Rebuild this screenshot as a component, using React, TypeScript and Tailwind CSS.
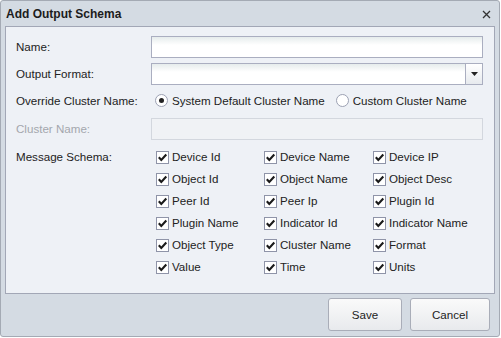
import { useState } from 'react';

const fields = [
  ['Device Id', 'Device Name', 'Device IP'],
  ['Object Id', 'Object Name', 'Object Desc'],
  ['Peer Id', 'Peer Ip', 'Plugin Id'],
  ['Plugin Name', 'Indicator Id', 'Indicator Name'],
  ['Object Type', 'Cluster Name', 'Format'],
  ['Value', 'Time', 'Units'],
];

function Check({ label }: { label: string }) {
  return (
    <label className="flex items-center h-[22px] gap-[3px] text-[#222]">
      <span className="w-[13px] h-[13px] border border-[#8f94a8] bg-white flex items-center justify-center shrink-0">
        <svg width="11" height="11" viewBox="0 0 11 11">
          <path d="M1.8 5.2 L4.3 7.9 L9.3 2.5" fill="none" stroke="#1a1a1a" strokeWidth="2.1" />
        </svg>
      </span>
      {label}
    </label>
  );
}

function Radio({ label, on }: { label: string; on?: boolean }) {
  return (
    <span className="flex items-center gap-[4px]">
      <span className="w-[13px] h-[13px] rounded-full border border-[#9ca1b3] bg-white flex items-center justify-center">
        {on && <span className="w-[5px] h-[5px] rounded-full bg-[#222]" />}
      </span>
      {label}
    </span>
  );
}

const input = 'h-[22px] border border-[#aaaec0] bg-gradient-to-b from-[#e6ecec] to-white to-[40%]';

export default function App() {
  const [mode] = useState('default');
  return (
    <div className="w-[501px] h-[338px] bg-white font-['Liberation_Sans',sans-serif] text-[11.6px] text-[#222]">
      <div className="w-[500px] h-[337px] border border-[#a4aab4] rounded-[3px] bg-[#d4dbe3] flex flex-col">
        {/* title */}
        <div className="h-[25px] flex items-center justify-between pl-[5px] pr-[8px]">
          <span className="font-bold text-[12px] text-[#1c1c1c]">Add Output Schema</span>
          <svg width="9" height="9" viewBox="0 0 9 9" className="mt-[1px]">
            <path d="M1 1 L8 8 M8 1 L1 8" stroke="#333" strokeWidth="1.3" />
          </svg>
        </div>

        {/* body */}
        <div className="mx-[4px] h-[268px] border border-[#a2a7b6] bg-[#eef1f6] pl-[10px] pr-[11px] pt-[9px]">
          <div className="flex items-center h-[22px]">
            <span className="w-[135px]">Name:</span>
            <div className={`flex-1 ${input}`} />
          </div>
          <div className="flex items-center h-[22px] mt-[5px]">
            <span className="w-[135px]">Output Format:</span>
            <div className={`flex-1 flex ${input}`}>
              <div className="flex-1" />
              <div className="w-[17px] border-l border-[#aaaec0] bg-gradient-to-b from-white to-[#e7eaee] flex items-center justify-center">
                <svg width="7" height="4" viewBox="0 0 7 4"><path d="M0 0 H7 L3.5 4 Z" fill="#222" /></svg>
              </div>
            </div>
          </div>
          <div className="flex items-center h-[22px] mt-[5px]">
            <span className="w-[135px]">Override Cluster Name:</span>
            <div className="flex items-center gap-[11px] pl-[4px]">
              <Radio label="System Default Cluster Name" on={mode === 'default'} />
              <Radio label="Custom Cluster Name" />
            </div>
          </div>
          <div className="flex items-center h-[22px] mt-[6px]">
            <span className="w-[135px] text-[#a4a7ad]">Cluster Name:</span>
            <div className="flex-1 h-[22px] border border-[#d3d7de] bg-[#f0f2f5]" />
          </div>
          <div className="flex mt-[6px]">
            <span className="w-[135px] h-[22px] flex items-center">Message Schema:</span>
            <div className="grid grid-cols-[108px_109px_auto] pl-[5px]">
              {fields.flat().map((f) => (
                <Check key={f} label={f} />
              ))}
            </div>
          </div>
        </div>

        {/* footer */}
        <div className="flex justify-end gap-[8px] pr-[9px] pt-[4px]">
          <button className="w-[74px] h-[33px] border border-[#a9adb8] rounded-[3px] bg-gradient-to-b from-[#fafafa] to-[#e8eaed]">
            Save
          </button>
          <button className="w-[80px] h-[33px] border border-[#a9adb8] rounded-[3px] bg-gradient-to-b from-[#fafafa] to-[#e8eaed]">
            Cancel
          </button>
        </div>
      </div>
    </div>
  );
}
